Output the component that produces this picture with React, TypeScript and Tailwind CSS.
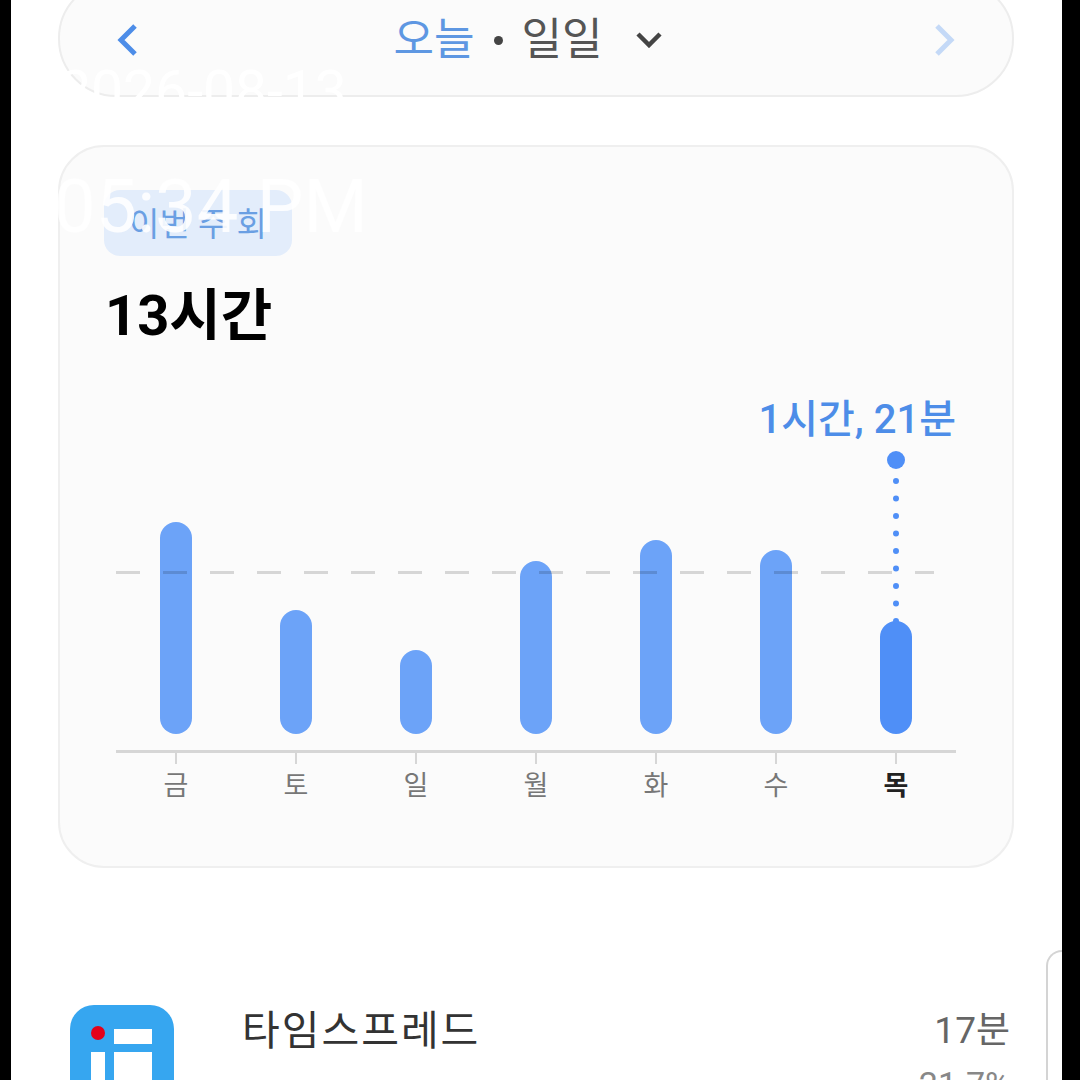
const SANS = "font-['Roboto','Noto_Sans_CJK_KR','Noto_Sans',sans-serif]";

type Day = { label: string; height: number; active?: boolean };

const days: Day[] = [
  { label: "금", height: 212 },
  { label: "토", height: 124 },
  { label: "일", height: 84 },
  { label: "월", height: 173 },
  { label: "화", height: 194 },
  { label: "수", height: 184 },
  { label: "목", height: 113, active: true },
];

function Chevron({ d, color, width = 4 }: { d: string; color: string; width?: number }) {
  return (
    <svg viewBox="0 0 24 34" className="h-[34px] w-[24px]" fill="none" stroke={color} strokeWidth={width} strokeLinejoin="miter">
      <path d={d} />
    </svg>
  );
}

function AppIcon() {
  return (
    <svg viewBox="0 0 104 104" className="h-[104px] w-[104px] shrink-0">
      <rect x="0" y="0" width="104" height="104" rx="24" fill="#36a6f0" />
      <circle cx="28" cy="28" r="7" fill="#e3001b" />
      <rect x="44" y="24" width="38" height="15" fill="#ffffff" />
      <rect x="21" y="47" width="14" height="57" fill="#ffffff" />
      <rect x="44" y="47" width="38" height="57" fill="#ffffff" />
    </svg>
  );
}

export default function App() {
  return (
    <div className={`relative flex h-[1080px] w-[1080px] overflow-hidden bg-black ${SANS}`}>
      <main className="ml-[11px] flex h-full w-[1051px] flex-col items-start overflow-hidden bg-white pl-[47px]">
        {/* Period selector */}
        <nav className="-mt-[20px] flex h-[117px] w-[956px] shrink-0 items-center justify-between rounded-[58px] border-2 border-[#ededed] bg-[#fbfbfb] pl-[55px] pr-[55px] pt-[3px]">
          <Chevron d="M20 3 L6 17 L20 31" color="#4d8de8" width={5} />
          <div className="-ml-[16px] flex items-center text-[44px] leading-none">
            <span className="text-[#5e97e2]">오늘</span>
            <span className="mx-[19px] h-[9px] w-[9px] rounded-full bg-[#444444]" />
            <span className="text-[#555555]">일일</span>
            <svg viewBox="0 0 26 16" className="ml-[34px] h-[16px] w-[26px]" fill="none" stroke="#444444" strokeWidth={4.5}>
              <path d="M2 2 L13 13 L24 2" />
            </svg>
          </div>
          <Chevron d="M4 3 L18 17 L4 31" color="#c4d9f7" width={5} />
        </nav>

        {/* Weekly usage card */}
        <section className="mt-[48px] h-[723px] w-[956px] shrink-0 rounded-[46px] border-2 border-[#efefef] bg-[#fbfbfb] pl-[44px] pt-[43px]">
          <div className="flex h-[66px] w-[188px] items-center justify-center rounded-[16px] bg-[#e3edfb] pt-[2px] text-[33px] leading-none text-[#6a9fe3]">
            이번 주 회
          </div>
          <h1 className="ml-[1px] mt-[30px] text-[56px] font-bold leading-[60px] text-black">13시간</h1>

          <div className="relative ml-[12px] mt-[56px] w-[840px]">
            <div className="flex h-[36px] items-center justify-end text-[40px] font-medium leading-none text-[#4d8de8]">
              1시간, 21분
            </div>
            <div className="grid h-[296px] grid-cols-7 items-end">
              {days.map((day) => (
                <div key={day.label} className="flex justify-center">
                  <div
                    className={`w-[32px] rounded-full ${day.active ? "bg-[#4f8ff7]" : "bg-[#6ca3f8]"}`}
                    style={{ height: day.height }}
                  />
                </div>
              ))}
            </div>

            {/* Average line and the selected day's marker sit over the bars */}
            <div className="absolute left-0 top-[169px] h-[3px] w-[818px] bg-[repeating-linear-gradient(90deg,#00000026_0,#00000026_24px,transparent_24px,transparent_47px)]" />
            <div className="absolute left-[771px] top-[49px] h-[18px] w-[18px] rounded-full bg-[#4f8ff7]" />
            <svg viewBox="0 0 6 150" className="absolute left-[777px] top-[76px] h-[150px] w-[6px]" fill="none" stroke="#4f8ff7" strokeWidth={6} strokeLinecap="round" strokeDasharray="0.01 17.5">
              <line x1="3" y1="3" x2="3" y2="150" />
            </svg>

            <div className="mt-[16px] grid grid-cols-7 border-t-[3px] border-[#d6d6d6]">
              {days.map((day) => (
                <div key={day.label} className="flex flex-col items-center">
                  <div className="h-[11px] w-[2px] bg-[#d6d6d6]" />
                  <span className={`mt-[6px] text-[27px] leading-[32px] ${day.active ? "font-bold text-[#222222]" : "text-[#777777]"}`}>
                    {day.label}
                  </span>
                </div>
              ))}
            </div>
          </div>
        </section>

        {/* First app row */}
        <section className="ml-[12px] mt-[137px] flex w-[940px] shrink-0 items-start">
          <AppIcon />
          <div className="ml-[68px] flex flex-1 justify-between pt-[2px]">
            <span className="text-[41px] leading-[48px] tracking-[2px] text-[#333333]">타임스프레드</span>
            <div className="flex flex-col items-end">
              <span className="text-[37px] leading-[48px] text-[#666666]">17분</span>
              <span className="mt-[9px] text-[34px] leading-[40px] text-[#888888]">21.7%</span>
            </div>
          </div>
        </section>
      </main>

      {/* Side panel handle on the screen edge */}
      <div className="absolute left-[1046px] top-[950px] h-[140px] w-[16px] rounded-tl-[16px] border-l-2 border-t-2 border-[#d4d4d4] bg-white" />

      {/* Timestamp printed over the capture */}
      <div className="absolute left-[59px] top-[62px] text-[57px] leading-[60px] text-white">2026-08-13</div>
      <div className="absolute left-[54px] top-[165px] text-[74px] leading-[84px] text-white/90">05:34 PM</div>
    </div>
  );
}
